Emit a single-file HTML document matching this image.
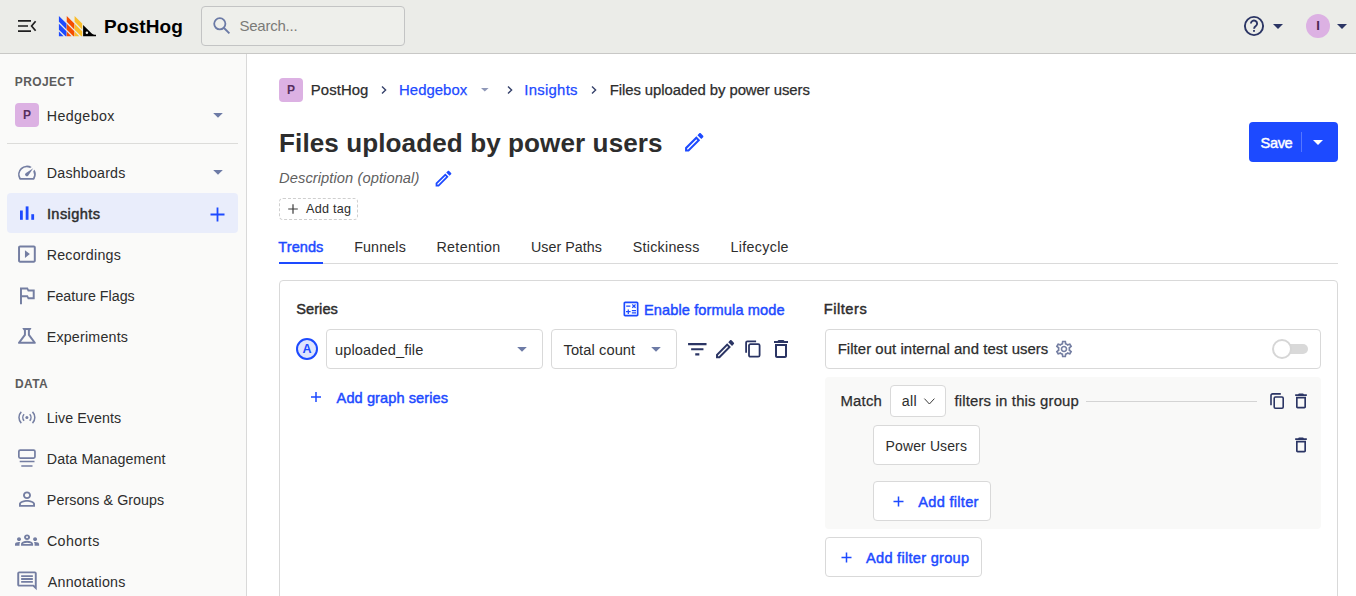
<!DOCTYPE html>
<html lang="en">
<head>
<meta charset="utf-8">
<title>Files uploaded by power users • PostHog</title>
<style>
*{box-sizing:border-box;margin:0;padding:0}
html,body{width:1356px;height:596px;overflow:hidden;background:#fff}
body{font-family:"Liberation Sans",Arial,sans-serif;font-size:15px;color:#2d2d2d;position:relative;-webkit-font-smoothing:antialiased}
.abs{position:absolute}
.t{position:absolute;white-space:nowrap;line-height:20px;height:20px}
.blue{color:#1d4aff}
.sb{font-weight:bold}
/* top bar */
#top{position:absolute;left:0;top:0;width:1356px;height:54px;background:#ebece8;border-bottom:1px solid #c8c8c6}
#search{position:absolute;left:201px;top:6px;width:204px;height:40px;border:1px solid #c3c4c4;border-radius:4px;background:#eeefeb}
/* sidebar */
#side{position:absolute;left:0;top:54px;width:247px;height:542px;background:#fafaf9;border-right:1px solid #d9d9d9}
.nav{position:absolute;left:47px;font-size:14.25px;color:#2d2d2d;white-space:nowrap;line-height:20px;height:20px}
.hd{position:absolute;left:15px;font-size:12px;font-weight:bold;letter-spacing:0.3px;color:#5c5c5c;line-height:16px;height:16px;white-space:nowrap}
.ico{position:absolute;overflow:visible}
.pbox{position:absolute;width:24px;height:24px;border-radius:4px;background:#dcb1e3;color:#572e5e;font-weight:bold;font-size:12px;text-align:center;line-height:24px}
.box{position:absolute;border:1px solid #d9d9d9;border-radius:4px;background:#fff}
.rg{font-size:14.25px}
.md{font-size:14.9px;-webkit-text-stroke:0.25px currentColor}
.sbd{font-size:14.6px;-webkit-text-stroke:0.45px currentColor;letter-spacing:0.2px}
</style>
</head>
<body>

<!-- ============ TOP BAR ============ -->
<div id="top">
  <svg class="ico" style="left:17px;top:19px" width="20" height="14" viewBox="0 0 20 14"><g stroke="#1f1f1f" stroke-width="1.7" fill="none"><path d="M1 1.9h13M1 7h10M1 12.1h13"/><path d="M18.6 2.3 14.6 7l4 4.7"/></g></svg>
  <svg class="ico" style="left:58px;top:15px" width="40" height="22" viewBox="0 0 40 22">
    <path fill="#1d4aff" d="M0.90 0.90 8.50 8.50 8.50 14.40 0.90 6.80zM0.90 8.75 8.50 16.35 8.50 21.30 7.55 21.30 0.90 14.65zM0.90 16.60 5.60 21.30 0.90 21.30z"/>
    <path fill="#f54e00" d="M8.75 0.90 16.35 8.50 16.35 14.40 8.75 6.80zM8.75 8.75 16.35 16.35 16.35 21.30 15.40 21.30 8.75 14.65zM8.75 16.60 13.45 21.30 8.75 21.30z"/>
    <path fill="#f9bd2b" d="M16.60 0.90 24.20 8.50 24.20 14.40 16.60 6.80zM16.60 8.75 24.20 16.35 24.20 21.30 23.25 21.30 16.60 14.65zM16.60 16.60 21.30 21.30 16.60 21.30z"/>
    <path fill="#000" d="M25.1 9.9 33.5 18.300C34.700 19.400 36.300 19.750 38 19.750V21.300H25.100z"/><circle cx="28.9" cy="17.8" r="1.25" fill="#ebece8"/>
  </svg>
  <div class="t" style="left: 103.9px; top: 15px; font-size: 19px; font-weight: bold; color: rgb(0, 0, 0); line-height: 24px; height: 24px; letter-spacing: 0.15px;">PostHog</div>
  <div id="search"></div>
  <svg class="ico" style="left:212px;top:16px" width="20" height="20" viewBox="0 0 20 20"><circle cx="7.8" cy="7.8" r="5.6" fill="none" stroke="#6b7aa6" stroke-width="1.8"/><path d="M12 12l5.4 5.4" stroke="#6b7aa6" stroke-width="1.9" fill="none"/></svg>
  <div class="t" style="left: 239.46px; top: 16px; font-size: 15px; color: rgb(123, 123, 120); letter-spacing: -0.234px;">Search...</div>
  <svg class="ico" style="left:1243px;top:15px" width="22" height="22" viewBox="0 0 22 22"><circle cx="11" cy="11" r="9.1" fill="none" stroke="#2b3564" stroke-width="1.9"/><path d="M7.9 8.6a3.1 3.1 0 1 1 4.9 2.5c-1 .7-1.7 1.3-1.7 2.6" fill="none" stroke="#2b3564" stroke-width="1.9"/><rect x="10.1" y="15" width="1.8" height="1.8" fill="#2b3564"/></svg>
  <svg class="ico" style="left:1272px;top:23px" width="12" height="7" viewBox="0 0 12 7"><path d="M1 1h10L6 6z" fill="#2b3564"/></svg>
  <div class="abs" style="left:1306px;top:14px;width:24px;height:24px;border-radius:12px;background:#dcb1e3;color:#4a2752;font-size:13px;font-weight:bold;text-align:center;line-height:24px">I</div>
  <svg class="ico" style="left:1336px;top:23px" width="12" height="7" viewBox="0 0 12 7"><path d="M1 1h10L6 6z" fill="#2b3564"/></svg>
</div>

<!-- ============ SIDEBAR ============ -->
<div id="side">
  <div class="hd" style="top: 20px; letter-spacing: 0.367px; left: 14.84px;">PROJECT</div>
  <div class="pbox" style="left:15px;top:49px">P</div>
  <div class="nav" style="top: 52px; letter-spacing: 0.369px; left: 46.84px;">Hedgebox</div>
  <svg class="ico" style="left:212px;top:58.300px" width="12" height="7" viewBox="0 0 12 7"><path d="M1.2 1h9.6L6 5.8z" fill="#6d7ba6"/></svg>
  <div class="abs" style="left:7px;top:89px;width:231px;height:1px;background:#dcdcda"></div>

  <div class="abs" style="left:7px;top:139px;width:231px;height:40px;border-radius:4px;background:#e9edfb"></div>
  <div class="nav" style="top: 109px; letter-spacing: 0.188px; left: 46.84px;">Dashboards</div>
  <svg class="ico" style="left:212px;top:115px" width="12" height="7" viewBox="0 0 12 7"><path d="M1.2 1h9.6L6 5.8z" fill="#6d7ba6"/></svg>
  <div class="nav sbd" style="top: 150px; letter-spacing: 0.411px; left: 46.91px;">Insights</div>
  <svg class="ico" style="left:210px;top:153px" width="15" height="15" viewBox="0 0 15 15"><path d="M7.5 0.5v14M0.5 7.5h14" stroke="#1d4aff" stroke-width="1.8"/></svg>
  <div class="nav" style="top: 191px; letter-spacing: 0.23px; left: 46.68px;">Recordings</div>
  <div class="nav" style="top: 232px; letter-spacing: 0.012px; left: 46.68px;">Feature Flags</div>
  <div class="nav" style="top: 273px; letter-spacing: 0.21px; left: 46.68px;">Experiments</div>
  <div class="hd" style="top: 322px; letter-spacing: 0.414px; left: 14.95px;">DATA</div>
  <div class="nav" style="top: 354px; letter-spacing: 0.071px; left: 46.84px;">Live Events</div>
  <div class="nav" style="top: 395px; letter-spacing: 0.102px; left: 46.84px;">Data Management</div>
  <div class="nav" style="top: 436px; letter-spacing: 0.063px; left: 46.84px;">Persons &amp; Groups</div>
  <div class="nav" style="top: 477px; left: 46.91px; letter-spacing: 0.411px;">Cohorts</div>
  <div class="nav" style="top: 518px; left: 47.80px; letter-spacing: 0.231px;">Annotations</div>

  <svg class="ico" style="left:0;top:-54px" width="247" height="596" viewBox="0 0 247 596">
    <g fill="#747ea2">
      <!-- gauge -->
      <path transform="translate(16.2,162) scale(0.89)" d="M20.38 8.57l-1.23 1.85a8 8 0 0 1-.22 7.58H5.07A8 8 0 0 1 15.58 6.85l1.85-1.23A10 10 0 0 0 3.35 19a2 2 0 0 0 1.720 1h13.850a2 2 0 0 0 1.740-1 10 10 0 0 0-.27-10.440zm-9.790 6.840a2 2 0 0 0 2.830 0l5.660-8.490-8.490 5.660a2 2 0 0 0 0 2.830z"/>
      <!-- recordings -->
      <path transform="translate(15.1,242.6) scale(0.985,0.955)" d="M10 8v8l5-4-5-4zm9-5H5c-1.100 0-2 .9-2 2v14c0 1.100.9 2 2 2h14c1.100 0 2-.9 2-2V5c0-1.100-.9-2-2-2zm0 16H5V5h14v14z"/>
      <!-- flag -->
      <path transform="translate(15.1,283.6) scale(0.98)" d="M14 6l-1-2H5v17h2v-7h5l1 2h7V6h-6zm4 8h-4l-1-2H7V6h5l1 2h5v6z"/>
      <!-- flask -->
      <path transform="translate(15.03,324.04) scale(0.99)" d="M13 11.330L18 18H6l5-6.670V6h2m2.960-2H8.040C7.620 4 7.390 4.480 7.650 4.810L9 6.500v4.170L3.200 18.400c-.49.660-.02 1.600.8 1.600h16c.82 0 1.290-.94.8-1.600L15 10.670V6.500l1.350-1.690c.26-.33.030-.81-.39-.81z"/>
      <!-- person -->
      <path transform="translate(15,487.7) scale(1,0.95)" d="M12 5.900c1.160 0 2.100.94 2.100 2.100s-.94 2.100-2.100 2.100S9.900 9.160 9.900 8s.94-2.100 2.100-2.100m0 9c2.970 0 6.100 1.460 6.100 2.100v1.100H5.900V17c0-.64 3.130-2.100 6.100-2.100M12 4C9.790 4 8 5.790 8 8s1.790 4 4 4 4-1.790 4-4-1.790-4-4-4zm0 9c-2.670 0-8 1.340-8 4v3h16v-3c0-2.660-5.330-4-8-4z"/>
      <!-- cohorts -->
      <path transform="translate(15,528.7) scale(1.005,0.95)" d="M4 13c1.100 0 2-.9 2-2s-.9-2-2-2-2 .9-2 2 .9 2 2 2zm1.130 1.100c-.37-.06-.74-.1-1.130-.1-.99 0-1.930.21-2.780.58C.48 14.900 0 15.620 0 16.430V18h4.500v-1.610c0-.83.23-1.610.63-2.290zM20 13c1.100 0 2-.9 2-2s-.9-2-2-2-2 .9-2 2 .9 2 2 2zm4 3.430c0-.81-.48-1.530-1.220-1.850-.85-.37-1.790-.58-2.780-.58-.39 0-.76.040-1.130.1.400.68.630 1.460.63 2.290V18H24v-1.570zm-7.760-2.780c-1.170-.52-2.610-.9-4.240-.9-1.630 0-3.070.39-4.240.9C6.680 14.130 6 15.210 6 16.390V18h12v-1.610c0-1.180-.68-2.260-1.760-2.740zM8.070 16c.09-.23.130-.39.910-.69.970-.38 1.990-.56 3.020-.56s2.050.18 3.020.56c.77.300.81.460.91.690H8.070zM12 8c.55 0 1 .45 1 1s-.45 1-1 1-1-.45-1-1 .45-1 1-1m0-2c-1.660 0-3 1.340-3 3s1.340 3 3 3 3-1.340 3-3-1.340-3-3-3z"/>
      <!-- annotations -->
      <path transform="translate(15.3,569.5) scale(0.975,0.948)" d="M21.990 4c0-1.100-.89-2-1.990-2H4c-1.100 0-2 .9-2 2v12c0 1.100.9 2 2 2h14l4 4-.01-18zM20 4v13.170L18.830 16H4V4h16zM6 12h12v2H6zm0-3h12v2H6zm0-3h12v2H6z"/>
      <!-- live events dot -->
      <circle cx="26.9" cy="417.5" r="1.5"/>
    </g>
    <!-- insights bars -->
    <g fill="#1d4aff"><rect x="20" y="210.500" width="2.8" height="9.3"/><rect x="25.7" y="206.400" width="2.8" height="13.4"/><rect x="31.3" y="214.200" width="2.8" height="5.6"/></g>
    <g fill="none" stroke="#747ea2" stroke-width="1.5">
      <!-- live events arcs -->
      <path d="M21.300 411.900c-3.100 3.100-3.100 8.100 0 11.200M32.500 411.900c3.100 3.100 3.100 8.100 0 11.200"/>
      <path d="M24.100 414.300c-1.700 1.800-1.700 4.600 0 6.400M29.700 414.300c1.700 1.800 1.700 4.600 0 6.400"/>
      <!-- data management -->
      <rect x="18.850" y="450.100" width="16.1" height="8" rx="1.300" stroke-width="1.700"/>
      <path d="M19.700 461.500h14.800M21.300 465.900h11.200" stroke-width="1.500"/>
    </g>
  </svg>
</div>

<!-- ============ MAIN ============ -->
<div id="main">

  <!-- breadcrumbs -->
  <div class="pbox" style="left:279px;top:78px">P</div>
  <div class="t md" style="left: 310.86px; top: 80px; letter-spacing: 0.059px;">PostHog</div>
  <svg class="ico" style="left:379px;top:84px" width="10" height="12" viewBox="0 0 10 12"><path d="M3 2.6 6.6 6 3 9.4" fill="none" stroke="#35416b" stroke-width="1.4"/></svg>
  <div class="t md blue" style="left: 399.08px; top: 80px; letter-spacing: 0.029px;">Hedgebox</div>
  <svg class="ico" style="left:480px;top:87px" width="10" height="6" viewBox="0 0 10 6"><path d="M1 1h7.6L4.8 4.6z" fill="#8f98b8"/></svg>
  <svg class="ico" style="left:505px;top:84px" width="10" height="12" viewBox="0 0 10 12"><path d="M3 2.6 6.6 6 3 9.4" fill="none" stroke="#35416b" stroke-width="1.4"/></svg>
  <div class="t md blue" style="left: 524.34px; top: 80px; letter-spacing: 0.262px;">Insights</div>
  <svg class="ico" style="left:589px;top:84px" width="10" height="12" viewBox="0 0 10 12"><path d="M3 2.6 6.6 6 3 9.4" fill="none" stroke="#35416b" stroke-width="1.4"/></svg>
  <div class="t md" style="left: 609.63px; top: 80px; letter-spacing: -0.059px;">Files uploaded by power users</div>

  <!-- title -->
  <div class="t" id="title" style="left: 279.10px; top: 124.6px; font-size: 26.1px; font-weight: bold; line-height: 36px; height: 36px; color: rgb(45, 45, 45); letter-spacing: 0.075px;">Files uploaded by power users</div>
  <svg class="ico" style="left:682px;top:130px" width="24.5" height="24.5" viewBox="0 0 24 24"><path fill="#1d4aff" d="M14.06 9.02l.92.92L5.92 19H5v-.92l9.06-9.06M17.66 3c-.25 0-.51.1-.7.29l-1.83 1.83 3.75 3.75 1.83-1.83c.39-.39.39-1.02 0-1.41l-2.34-2.34c-.2-.2-.45-.29-.71-.29zm-3.6 3.19L3 17.25V21h3.75L17.81 9.94l-3.75-3.75z"/></svg>
  <div class="t" style="left: 279.07px; top: 168px; font-size: 14.7px; font-style: italic; color: rgb(95, 95, 95); letter-spacing: 0.071px;">Description (optional)</div>
  <svg class="ico" style="left:432.6px;top:167.5px" width="21" height="21" viewBox="0 0 24 24"><path fill="#1d4aff" d="M14.06 9.02l.92.92L5.92 19H5v-.92l9.06-9.06M17.66 3c-.25 0-.51.1-.7.29l-1.83 1.83 3.75 3.75 1.83-1.83c.39-.39.39-1.02 0-1.41l-2.34-2.34c-.2-.2-.45-.29-.71-.29zm-3.6 3.19L3 17.25V21h3.75L17.81 9.94l-3.75-3.75z"/></svg>
  <div class="abs" style="left:279px;top:198px;width:79px;height:22px;border:1px dashed #cfcfcf;border-radius:4px;background:#fff"></div>
  <svg class="ico" style="left:287.700px;top:204px" width="10" height="10" viewBox="0 0 10 10"><path d="M5 0.200v9.600M0.200 5h9.600" stroke="#3a3a3a" stroke-width="1.200"/></svg>
  <div class="t" style="left: 305.95px; top: 199px; font-size: 12.6px; color: rgb(45, 45, 45); letter-spacing: 0.29px;">Add tag</div>

  <!-- tabs -->
  <div class="abs" style="left:279px;top:263px;width:1059px;height:1px;background:#dadada"></div>
  <div class="abs" style="left:279px;top:262px;width:44px;height:2px;background:#1d4aff"></div>
  <div class="t sbd blue" style="left: 278.35px; top: 237px; letter-spacing: 0.039px;">Trends</div>
  <div class="t rg" style="left: 354.19px; top: 237px; letter-spacing: 0.148px;">Funnels</div>
  <div class="t rg" style="left: 436.5px; top: 237px; letter-spacing: 0.324px;">Retention</div>
  <div class="t rg" style="left: 531.03px; top: 237px; letter-spacing: 0.04px;">User Paths</div>
  <div class="t rg" style="left: 632.74px; top: 237px; letter-spacing: 0.268px;">Stickiness</div>
  <div class="t rg" style="left: 730.55px; top: 237px; letter-spacing: 0.32px;">Lifecycle</div>

  <!-- card -->
  <div class="abs" style="left:279px;top:280px;width:1059px;height:330px;border:1px solid #d9d9d9;border-radius:4px;background:#fff"></div>

  <!-- series -->
  <div class="t sbd" style="left: 296.16px; top: 299px; letter-spacing: 0.077px;">Series</div>
  <svg class="ico" style="left:621px;top:299px" width="20" height="20" viewBox="0 0 24 24"><path fill="#1d4aff" d="M19 3H5c-1.1 0-2 .9-2 2v14c0 1.1.9 2 2 2h14c1.1 0 2-.9 2-2V5c0-1.1-.9-2-2-2zm0 16H5V5h14v14z M6.25 7.72h5v1.5h-5z M13 15.75h5v1.5h-5z M13 13.25h5v1.5h-5z M8 18h1.5v-2h2v-1.5h-2v-2H8v2H6V16h2z M14.09 10.95l1.41-1.41 1.41 1.41 1.06-1.06-1.41-1.42 1.41-1.41L16.91 6 15.5 7.41 14.09 6l-1.06 1.06 1.41 1.41-1.41 1.42z"/></svg>
  <div class="t sbd blue" style="left: 643.89px; top: 300px; letter-spacing: 0.117px;">Enable formula mode</div>
  <div class="abs" style="left:296px;top:338px;width:22px;height:22px;border-radius:11px;border:2px solid #1d4aff;background:#dfe5fd;color:#1d4aff;font-weight:bold;font-size:12.5px;line-height:18px;text-align:center">A</div>
  <div class="box" style="left:326px;top:329px;width:217px;height:40px"></div>
  <div class="t rg" style="left: 334.93px; top: 340px; font-size: 14.6px; letter-spacing: 0.133px;">uploaded_file</div>
  <svg class="ico" style="left:516px;top:346px" width="12" height="7" viewBox="0 0 12 7"><path d="M1.2 1h9.6L6 5.8z" fill="#6d7ba6"/></svg>
  <div class="box" style="left:551px;top:329px;width:126px;height:40px"></div>
  <div class="t rg" style="left: 563.48px; top: 340px; font-size: 14.7px; letter-spacing: 0.068px;">Total count</div>
  <svg class="ico" style="left:650px;top:346px" width="12" height="7" viewBox="0 0 12 7"><path d="M1.2 1h9.6L6 5.8z" fill="#6d7ba6"/></svg>
  <svg class="ico" style="left:684.7px;top:337.2px" width="24.6" height="24.6" viewBox="0 0 24 24"><path fill="#2b3564" d="M10 18.050h4v-2.100h-4v2.100zM3 5.950v2.100h18V5.950H3zm3 7.100h12v-2.100H6v2.100z"/></svg>
  <svg class="ico" style="left:712.8px;top:336.9px" width="24.2" height="24.2" viewBox="0 0 24 24"><path fill="#2b3564" d="M14.060 9.020l.92.92L5.920 19H5v-.92l9.060-9.060M17.660 3c-.25 0-.51.1-.7.290l-1.830 1.830 3.750 3.750 1.830-1.830c.39-.39.39-1.020 0-1.410l-2.340-2.340c-.2-.2-.45-.29-.71-.29zm-3.600 3.190L3 17.250V21h3.750L17.810 9.940l-3.750-3.750z"/></svg>
  <svg class="ico" style="left:743px;top:338px" width="20" height="22" viewBox="0 0 20 22"><g fill="none" stroke="#2b3564" stroke-width="1.8"><path d="M13.1 3.300H4.400c-.7 0-1.300.6-1.300 1.300V14.800"/><rect x="6" y="6.200" width="10.600" height="12.500" rx="1.400"/></g></svg>
  <svg class="ico" style="left:769px;top:337px" width="24" height="24" viewBox="0 0 24 24"><path fill="#2b3564" d="M6 19c0 1.1.9 2 2 2h8c1.1 0 2-.9 2-2V7H6v12zM8 9h8v10H8V9zm7.5-5l-1-1h-5l-1 1H5v2h14V4h-3.5z"/></svg>
  <svg class="ico" style="left:311px;top:392px" width="10" height="10" viewBox="0 0 10 10"><path d="M5 0v10M0 5h10" stroke="#1d4aff" stroke-width="1.500"/></svg>
  <div class="t sbd blue" style="left: 336.6px; top: 388px; letter-spacing: 0.075px;">Add graph series</div>

  <!-- filters -->
  <div class="t sbd" style="left: 823.75px; top: 299px; letter-spacing: 0.535px;">Filters</div>
  <div class="box" style="left:825px;top:329px;width:496px;height:40px"></div>
  <div class="t md" style="left: 837.69px; top: 339px; letter-spacing: 0.062px;">Filter out internal and test users</div>
  <svg class="ico" style="left:1054px;top:339px" width="20" height="20" viewBox="0 0 24 24"><path fill="#747ea2" d="M19.43 12.98c.04-.32.07-.64.07-.98 0-.34-.03-.66-.07-.98l2.11-1.65c.19-.15.24-.42.12-.64l-2-3.46c-.09-.16-.26-.25-.44-.25-.06 0-.12.01-.17.03l-2.49 1c-.52-.4-1.08-.73-1.69-.98l-.38-2.65C14.46 2.18 14.25 2 14 2h-4c-.25 0-.46.18-.49.42l-.38 2.65c-.61.25-1.17.59-1.69.98l-2.49-1c-.06-.02-.12-.03-.18-.03-.17 0-.34.09-.43.25l-2 3.46c-.13.22-.07.49.12.64l2.11 1.65c-.04.32-.07.65-.07.98 0 .33.03.66.07.98l-2.11 1.65c-.19.15-.24.42-.12.64l2 3.46c.09.16.26.25.44.25.06 0 .12-.01.17-.03l2.49-1c.52.4 1.08.73 1.69.98l.38 2.65c.03.24.24.42.49.42h4c.25 0 .46-.18.49-.42l.38-2.65c.61-.25 1.17-.59 1.69-.98l2.49 1c.06.02.12.03.18.03.17 0 .34-.09.43-.25l2-3.46c.12-.22.07-.49-.12-.64l-2.11-1.65zm-1.98-1.71c.04.31.05.52.05.73 0 .21-.02.43-.05.73l-.14 1.13.89.7 1.08.84-.7 1.21-1.27-.51-1.04-.42-.9.68c-.43.32-.84.56-1.25.73l-1.06.43-.16 1.13-.2 1.35h-1.4l-.19-1.35-.16-1.13-1.06-.43c-.43-.18-.83-.41-1.23-.71l-.91-.7-1.06.43-1.27.51-.7-1.21 1.08-.84.89-.7-.14-1.13c-.03-.31-.05-.54-.05-.74s.02-.43.05-.73l.14-1.13-.89-.7-1.08-.84.7-1.21 1.27.51 1.04.42.9-.68c.43-.32.84-.56 1.25-.73l1.06-.43.16-1.13.2-1.35h1.39l.19 1.35.16 1.13 1.06.43c.43.18.83.41 1.23.71l.91.7 1.06-.43 1.27-.51.7 1.21-1.07.85-.89.7.14 1.13zM12 8c-2.210 0-4 1.790-4 4s1.790 4 4 4 4-1.790 4-4-1.790-4-4-4zm0 6c-1.100 0-2-.9-2-2s.9-2 2-2 2 .9 2 2-.9 2-2 2z"/></svg>
  <div class="abs" style="left:1274px;top:344px;width:34px;height:10px;border-radius:5px;background:#d9d9d9"></div>
  <div class="abs" style="left:1271.5px;top:339px;width:20px;height:20px;border-radius:10px;border:2px solid #d6d6d6;background:#fff"></div>

  <div class="abs" style="left:825px;top:377px;width:496px;height:152px;border-radius:4px;background:#f9f9f8"></div>
  <div class="t md" style="left: 840.39px; top: 391px; letter-spacing: 0.229px;">Match</div>
  <div class="box" style="left:890px;top:385px;width:56px;height:32px"></div>
  <div class="t rg" style="left: 901.82px; top: 391px; letter-spacing: 0.294px;">all</div>
  <svg class="ico" style="left:923px;top:397px" width="13" height="9" viewBox="0 0 13 9"><path d="M1.4 1.6 6.4 7l5-5.4" fill="none" stroke="#3a3a3a" stroke-width="1"/></svg>
  <div class="t md" style="left: 954.38px; top: 391px; letter-spacing: 0.182px;">filters in this group</div>
  <div class="abs" style="left:1086px;top:401px;width:171px;height:1px;background:#d4d4d4"></div>
  <svg class="ico" style="left:1268.5px;top:392px" width="17" height="18" viewBox="0 0 17 18"><g fill="none" stroke="#2b3564" stroke-width="1.6"><path d="M11.8 1.9H3.6c-.9 0-1.6.7-1.6 1.6v9.8"/><rect x="5.2" y="5" width="9" height="11.2" rx="1.2"/></g></svg>
  <svg class="ico" style="left:1291px;top:391px" width="20" height="20" viewBox="0 0 24 24"><path fill="#2b3564" d="M6 19c0 1.1.9 2 2 2h8c1.1 0 2-.9 2-2V7H6v12zM8 9h8v10H8V9zm7.5-5l-1-1h-5l-1 1H5v2h14V4h-3.500z"/></svg>
  <div class="box" style="left:873px;top:425px;width:107px;height:40px"></div>
  <div class="t rg" style="left: 885.62px; top: 436px; font-size: 14px; letter-spacing: 0.116px;">Power Users</div>
  <svg class="ico" style="left:1291px;top:435px" width="20" height="20" viewBox="0 0 24 24"><path fill="#2b3564" d="M6 19c0 1.1.9 2 2 2h8c1.1 0 2-.9 2-2V7H6v12zM8 9h8v10H8V9zm7.5-5l-1-1h-5l-1 1H5v2h14V4h-3.5z"/></svg>
  <div class="box" style="left:873px;top:481px;width:118px;height:40px"></div>
  <svg class="ico" style="left:892.5px;top:495.5px" width="11" height="11" viewBox="0 0 11 11"><path d="M5.5 0.5v10M0.500 5.5h10" stroke="#1d4aff" stroke-width="1.5"/></svg>
  <div class="t sbd blue" style="left: 918.34px; top: 492px; letter-spacing: 0.273px;">Add filter</div>
  <div class="box" style="left:825px;top:537px;width:157px;height:40px"></div>
  <svg class="ico" style="left:840.5px;top:551.5px" width="11" height="11" viewBox="0 0 11 11"><path d="M5.5 0.5v10M0.5 5.500h10" stroke="#1d4aff" stroke-width="1.5"/></svg>
  <div class="t sbd blue" style="left: 866.02px; top: 548px; letter-spacing: 0.27px;">Add filter group</div>

  <!-- save -->
  <div class="abs" style="left:1249px;top:122px;width:89px;height:40px;border-radius:4px;background:#1d4aff"></div>
  <div class="t sbd" style="left: 1260.6px; top: 133px; color: rgb(255, 255, 255); letter-spacing: -0.385px;">Save</div>
  <div class="abs" style="left:1301px;top:132px;width:1px;height:20px;background:rgba(255,255,255,.25)"></div>
  <svg class="ico" style="left:1312px;top:139px" width="12" height="7" viewBox="0 0 12 7"><path d="M1 1h10L6 6z" fill="#fff"/></svg>
</div>
</body>
</html>
